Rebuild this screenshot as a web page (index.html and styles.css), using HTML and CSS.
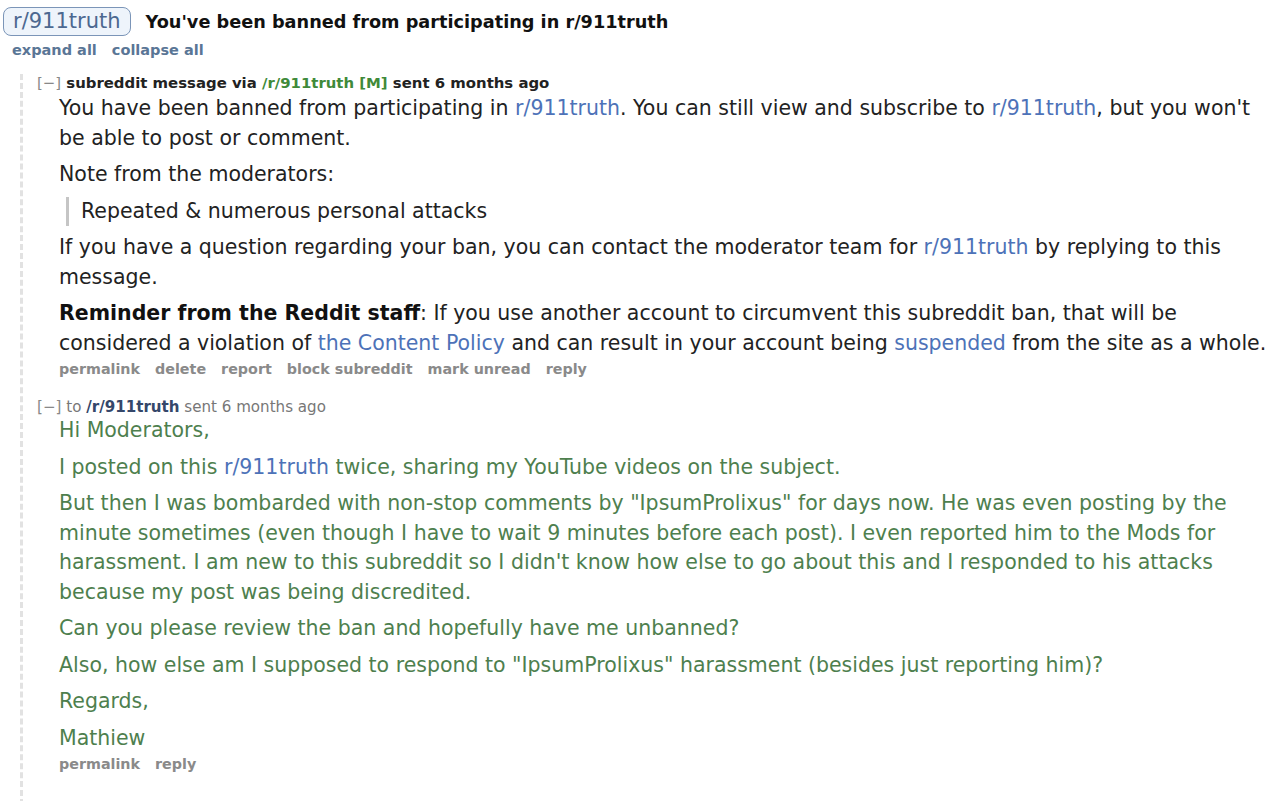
FILE: index.html
```html
<!DOCTYPE html>
<html lang="en">
<head>
    <meta charset="UTF-8">
    <title>You've been banned from participating in r/911truth</title>
    <link rel="stylesheet" href="styles.css">
</head>
<body>
    <div class="thread-head">
        <a class="sub-pill" href="#">r/911truth</a>
        <h1 class="thread-title">You've been banned from participating in r/911truth</h1>
    </div>
    <div class="thread-tools">
        <a href="#">expand all</a>
        <a href="#">collapse all</a>
    </div>

    <div class="thread">
        <div class="message">
            <p class="tagline">
                <a class="toggle" href="#">[&minus;]</a>
                subreddit message via <a class="sub-green" href="#">/r/911truth</a>
                <span class="mod">[M]</span> sent 6 months ago
            </p>
            <div class="md">
                <p>You have been banned from participating in <a href="#">r/911truth</a>. You can still view and subscribe to <a href="#">r/911truth</a>, but you won't be able to post or comment.</p>
                <p>Note from the moderators:</p>
                <blockquote>Repeated &amp; numerous personal attacks</blockquote>
                <p>If you have a question regarding your ban, you can contact the moderator team for <a href="#">r/911truth</a> by replying to this message.</p>
                <p><strong>Reminder from the Reddit staff</strong>: If you use another account to circumvent this subreddit ban, that will be considered a violation of <a href="#">the Content Policy</a> and can result in your account being <a href="#">suspended</a> from the site as a whole.</p>
            </div>
            <ul class="buttons">
                <li><a href="#">permalink</a></li>
                <li><a href="#">delete</a></li>
                <li><a href="#">report</a></li>
                <li><a href="#">block subreddit</a></li>
                <li><a href="#">mark unread</a></li>
                <li><a href="#">reply</a></li>
            </ul>
        </div>

        <div class="message sent">
            <p class="tagline light">
                <a class="toggle" href="#">[&minus;]</a>
                to <a class="sub-dark" href="#">/r/911truth</a> sent 6 months ago
            </p>
            <div class="md">
                <p>Hi Moderators,</p>
                <p>I posted on this <a href="#">r/911truth</a> twice, sharing my YouTube videos on the subject.</p>
                <p>But then I was bombarded with non-stop comments by "IpsumProlixus" for days now. He was even posting by the minute sometimes (even though I have to wait 9 minutes before each post). I even reported him to the Mods for harassment. I am new to this subreddit so I didn't know how else to go about this and I responded to his attacks because my post was being discredited.</p>
                <p>Can you please review the ban and hopefully have me unbanned?</p>
                <p>Also, how else am I supposed to respond to "IpsumProlixus" harassment (besides just reporting him)?</p>
                <p>Regards,</p>
                <p>Mathiew</p>
            </div>
            <ul class="buttons">
                <li><a href="#">permalink</a></li>
                <li><a href="#">reply</a></li>
            </ul>
        </div>
    </div>
</body>
</html>
```

FILE: styles.css
```css
body {
    font-family: "DejaVu Sans", Verdana, sans-serif;
    background-color: #ffffff;
    color: #222222;
    margin: 0;
    padding: 7px 0 0 3px;
}
a {
    text-decoration: none;
}
.thread-head {
    display: flex;
    align-items: center;
    gap: 15px;
}
.sub-pill {
    display: inline-block;
    font-size: 21px;
    line-height: 23px;
    padding: 2px 9px 2px 9px;
    color: #4c6890;
    background-color: #eef4fb;
    border: 1px solid #7b95b8;
    border-radius: 8px;
}
.thread-title {
    font-size: 17.7px;
    font-weight: bold;
    margin: 0;
    color: #111111;
}
.thread-tools {
    margin: 6px 0 0 9px;
    display: flex;
    gap: 15px;
}
.thread-tools a {
    font-size: 14.5px;
    font-weight: bold;
    color: #5a7696;
}
.thread {
    margin: 16px 0 0 17px;
    padding-left: 14px;
    padding-bottom: 12px;
    border-left: 3px dashed #e2e2e2;
}
.message {
    margin-bottom: 20px;
}
.tagline {
    margin: 0 0 2px 0;
    font-size: 14.9px;
    font-weight: bold;
    color: #222222;
    line-height: 18px;
}
.tagline.light {
    margin-bottom: 0;
    font-weight: normal;
    font-size: 15.1px;
    color: #777777;
}
.toggle {
    color: #888888;
    font-weight: normal;
}
.sub-green,
.mod {
    color: #3f8a3a;
}
.sub-dark {
    color: #35476a;
    font-weight: bold;
}
.md {
    padding: 0 6px 0 22px;
    font-size: 20.5px;
    line-height: 29.5px;
}
.md p {
    margin: 0 0 7px 0;
}
.md a {
    color: #4d72b8;
}
.md strong {
    color: #111111;
}
.md blockquote {
    margin: 0 0 7px 7px;
    padding-left: 12px;
    border-left: 3px solid #c5c5c5;
}
.sent .md {
    color: #4e7f4e;
}
.buttons {
    list-style: none;
    margin: -6px 0 0 0;
    padding: 0 0 0 22px;
    display: flex;
    gap: 15px;
}
.buttons a {
    font-size: 14.3px;
    font-weight: bold;
    color: #8a8a8a;
}
```
